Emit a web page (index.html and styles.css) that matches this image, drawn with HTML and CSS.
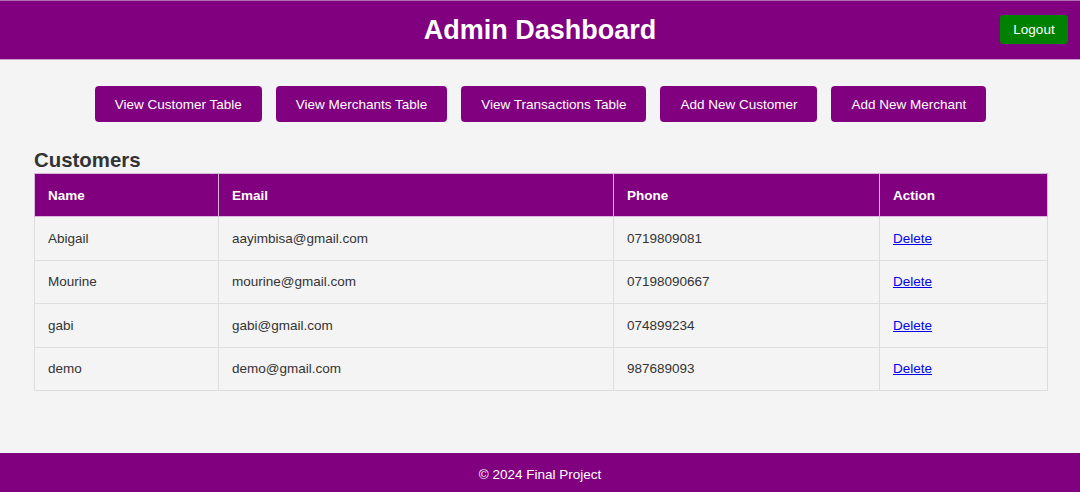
FILE: index.html
```html
<!DOCTYPE html>
<html lang="en">
<head>
<meta charset="utf-8">
<title>Admin Dashboard</title>
<link rel="stylesheet" href="styles.css">
</head>
<body>
<header class="topbar">
  <div class="spacer"></div>
  <h1 class="title">Admin Dashboard</h1>
  <button class="logout">Logout</button>
</header>
<main class="content">
  <nav class="actions">
    <button class="action-btn">View Customer Table</button>
    <button class="action-btn">View Merchants Table</button>
    <button class="action-btn">View Transactions Table</button>
    <button class="action-btn">Add New Customer</button>
    <button class="action-btn">Add New Merchant</button>
  </nav>
  <section class="section">
    <h2 class="section-title">Customers</h2>
    <table class="data-table">
      <colgroup>
        <col class="c-name"><col class="c-email"><col class="c-phone"><col class="c-action">
      </colgroup>
      <thead>
        <tr><th>Name</th><th>Email</th><th>Phone</th><th>Action</th></tr>
      </thead>
      <tbody>
        <tr><td>Abigail</td><td>aayimbisa@gmail.com</td><td>0719809081</td><td><a href="#">Delete</a></td></tr>
        <tr><td>Mourine</td><td>mourine@gmail.com</td><td>07198090667</td><td><a href="#">Delete</a></td></tr>
        <tr><td>gabi</td><td>gabi@gmail.com</td><td>074899234</td><td><a href="#">Delete</a></td></tr>
        <tr><td>demo</td><td>demo@gmail.com</td><td>987689093</td><td><a href="#">Delete</a></td></tr>
      </tbody>
    </table>
  </section>
</main>
<footer class="footer">© 2024 Final Project</footer>
</body>
</html>
```
FILE: styles.css
```css
html, body {
  margin: 0;
  padding: 0;
  height: 100%;
}
body {
  font-family: "Liberation Sans", Arial, sans-serif;
  background: #f4f4f4;
  color: #333;
  display: flex;
  flex-direction: column;
  min-height: 492px;
}
.topbar {
  background: #800080;
  border-top: 1px solid #b070b0;
  border-bottom: 1px solid #c9a0c9;
  display: grid;
  grid-template-columns: 1fr auto 1fr;
  align-items: center;
  padding: 0 12px;
  box-sizing: border-box;
  height: 60px;
}
.title {
  margin: 0;
  color: #fff;
  font-size: 27px;
  font-weight: bold;
}
.logout {
  justify-self: end;
  background: #008000;
  color: #fff;
  border: none;
  border-radius: 3px;
  font-family: inherit;
  font-size: 13.5px;
  width: 68px;
  height: 29px;
  padding: 0;
  margin-top: -1px;
}
.content {
  flex: 1;
  padding: 26px 33px 0 34px;
}
.actions {
  display: flex;
  justify-content: center;
  gap: 14px;
}
.action-btn {
  background: #800080;
  color: #fff;
  border: none;
  border-radius: 4px;
  font-family: inherit;
  font-size: 13.5px;
  height: 36px;
  padding: 0 20px;
}
.section {
  margin-top: 27px;
}
.section-title {
  margin: 0 0 1px;
  font-size: 20.4px;
  line-height: 23px;
  font-weight: bold;
  color: #333;
}
.data-table {
  width: 100%;
  border-collapse: collapse;
  table-layout: fixed;
  font-size: 13.5px;
}
.c-name { width: 184px; }
.c-email { width: 395px; }
.c-phone { width: 266px; }
.c-action { width: 168px; }
.data-table th,
.data-table td {
  border: 1px solid #ddd;
  text-align: left;
  padding: 0 13px;
  height: 42px;
}
.data-table td {
  height: 42.5px;
}
.data-table th {
  background: #800080;
  color: #fff;
  font-weight: bold;
  border-color: #d8b8d8;
}
.data-table td a {
  color: #0000ee;
  text-decoration: underline;
}
.footer {
  background: #800080;
  color: #fff;
  text-align: center;
  font-size: 13.5px;
  height: 39px;
  line-height: 43px;
}
```
